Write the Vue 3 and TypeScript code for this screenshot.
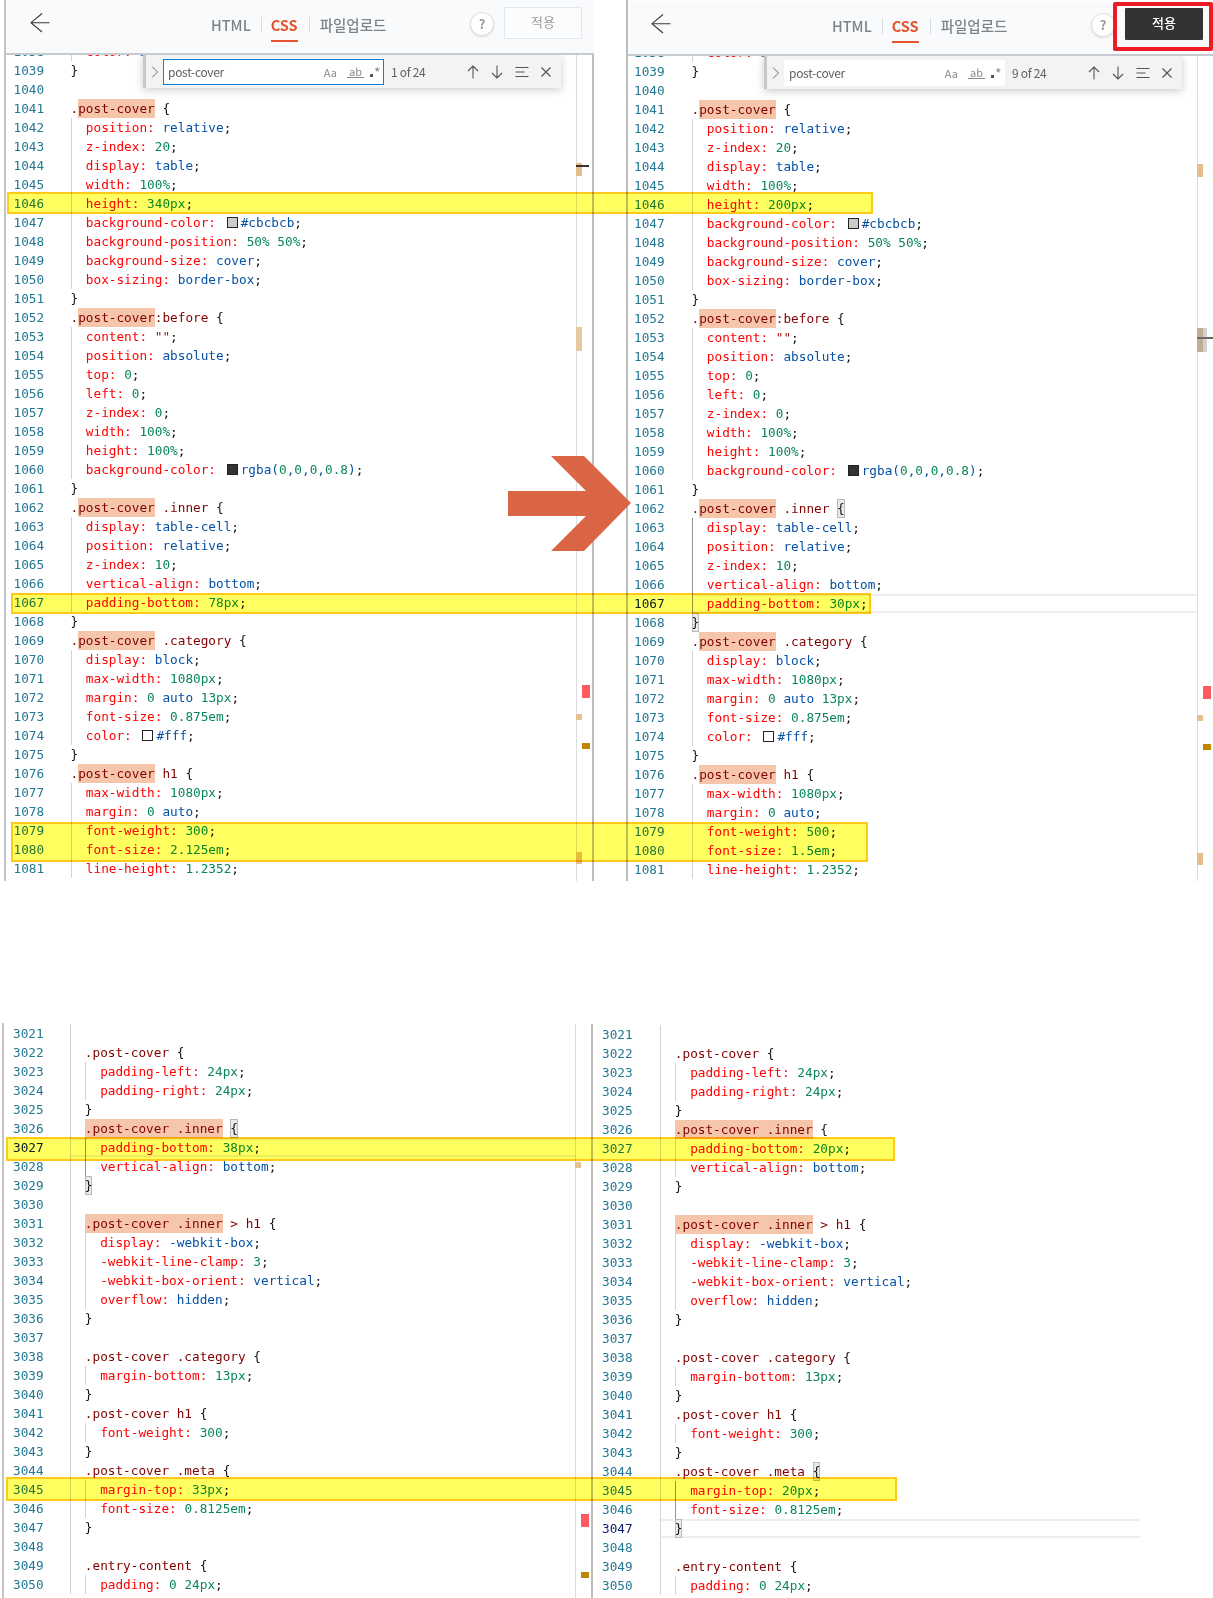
<script setup lang="ts">
type Tok = { t: string; c: string; sw?: string }
type Line = { n: number; toks: Tok[]; guides: number; active: boolean; cur: boolean; dark: boolean }

const topA = (h: string, pb: string, w: string, fs: string): string[] => [
  '  color: inherit;', '}', '', '.post-cover {', '  position: relative;', '  z-index: 20;', '  display: table;', '  width: 100%;',
  `  height: ${h};`, '  background-color: #cbcbcb;', '  background-position: 50% 50%;', '  background-size: cover;', '  box-sizing: border-box;', '}',
  '.post-cover:before {', '  content: "";', '  position: absolute;', '  top: 0;', '  left: 0;', '  z-index: 0;', '  width: 100%;', '  height: 100%;',
  '  background-color: rgba(0,0,0,0.8);', '}', '.post-cover .inner {', '  display: table-cell;', '  position: relative;', '  z-index: 10;', '  vertical-align: bottom;',
  `  padding-bottom: ${pb};`, '}', '.post-cover .category {', '  display: block;', '  max-width: 1080px;', '  margin: 0 auto 13px;', '  font-size: 0.875em;', '  color: #fff;', '}',
  '.post-cover h1 {', '  max-width: 1080px;', '  margin: 0 auto;', `  font-weight: ${w};`, `  font-size: ${fs};`, '  line-height: 1.2352;'
]

const bottomA = (pb: string, mt: string): string[] => [
  '  ', '  .post-cover {', '    padding-left: 24px;', '    padding-right: 24px;', '  }', '  .post-cover .inner {', `    padding-bottom: ${pb};`, '    vertical-align: bottom;', '  }', '  ',
  '  .post-cover .inner > h1 {', '    display: -webkit-box;', '    -webkit-line-clamp: 3;', '    -webkit-box-orient: vertical;', '    overflow: hidden;', '  }', '  ',
  '  .post-cover .category {', '    margin-bottom: 13px;', '  }', '  .post-cover h1 {', '    font-weight: 300;', '  }', '  .post-cover .meta {', `    margin-top: ${mt};`, '    font-size: 0.8125em;', '  }', '  ',
  '  .entry-content {', '    padding: 0 24px;'
]

function valueToks(v: string): Tok[] {
  const out: Tok[] = []
  const re = /(#[0-9a-f]{3,6})|(-?\d*\.?\d+(?:px|em|%)?)|("[^"]*")|([a-z-]+\(?)|(\s+)|(.)/g
  let m: RegExpExecArray | null
  while ((m = re.exec(v))) {
    if (m[1]) out.push({ t: '', c: 'sw', sw: m[1] }, { t: m[1], c: 'kw' })
    else if (m[2]) out.push({ t: m[2], c: 'val' })
    else if (m[3]) out.push({ t: m[3], c: 'str' })
    else if (m[4]) {
      if (m[4] === 'rgba(') out.push({ t: '', c: 'sw', sw: 'rgba(0,0,0,0.8)' })
      out.push({ t: m[4], c: 'kw' })
    } else if (m[5]) out.push({ t: m[5], c: 'pl' })
    else out.push({ t: m[0], c: m[0] === ')' || m[0] === ',' ? 'kw' : 'pl' })
  }
  return out
}

function tokenize(src: string, hl: string, box: boolean): Tok[] {
  const ws = src.match(/^\s*/)?.[0] ?? ''
  const body = src.slice(ws.length)
  const out: Tok[] = [{ t: ws, c: 'pl' }]
  if (!body) return out
  if (body === '}') {
    out.push({ t: '}', c: box ? 'brace box' : 'brace' })
  } else if (body.endsWith('{')) {
    const sel = body.slice(0, -1)
    const i = sel.indexOf(hl)
    if (i >= 0) {
      out.push({ t: sel.slice(0, i), c: 'sel' }, { t: hl, c: 'sel hl' }, { t: sel.slice(i + hl.length), c: 'sel' })
    } else out.push({ t: sel, c: 'sel' })
    out.push({ t: '{', c: box ? 'brace box' : 'brace' })
  } else {
    const k = body.indexOf(':')
    out.push({ t: body.slice(0, k + 1), c: 'prop' }, { t: ' ', c: 'pl' })
    out.push(...valueToks(body.slice(k + 2)))
  }
  return out
}

function build(sources: string[], start: number, hl: string, active: number, cur: boolean, boxes: number[], dark: number[]): Line[] {
  return sources.map((s, i) => {
    const n = start + i
    const indent = (s.match(/^\s*/)?.[0].length ?? 0)
    return {
      n,
      toks: tokenize(s, hl, boxes.includes(n)),
      guides: Math.floor(indent / 2),
      active: n === active,
      cur: cur && n === active,
      dark: dark.includes(n)
    }
  })
}

const tl = build(topA('340px', '78px', '300', '2.125em'), 1038, 'post-cover', 0, false, [], [])
const tr = build(topA('200px', '30px', '500', '1.5em'), 1038, 'post-cover', 1067, true, [1062, 1068], [1063, 1064, 1065, 1066, 1067])
const bl = build(bottomA('38px', '33px'), 3021, '.post-cover .inner', 3027, true, [3026, 3029], [3027, 3028])
const br = build(bottomA('20px', '20px'), 3021, '.post-cover .inner', 3047, true, [3044, 3047], [3045, 3046])

type Mark = { x: number; y: number; w: number; h: number; c: string }
const markSet = (x: number, dy: number): Mark[] => [
  { x, y: 163 + dy, w: 6, h: 13, c: '#e6bd8c' },
  { x, y: 327 + dy, w: 6, h: 24, c: '#e6c9a0' },
  { x: x + 6, y: 685 + dy, w: 8, h: 13, c: '#ff5a5f' },
  { x, y: 714 + dy, w: 6, h: 6, c: '#e8c191' },
  { x: x + 6, y: 743 + dy, w: 8, h: 6, c: '#bf8803' },
  { x, y: 852 + dy, w: 6, h: 12, c: '#e6bd8c' }
]
const marks: Mark[] = [
  ...markSet(576, 0),
  { x: 576, y: 165, w: 13, h: 1.5, c: '#333' },
  ...markSet(1197, 1),
  { x: 1197, y: 337, w: 16, h: 1.5, c: '#666' },
  { x: 1197, y: 328, w: 10, h: 24, c: 'rgba(120,120,120,.35)' },
  { x: 575, y: 1162, w: 6, h: 6, c: '#e8c191' },
  { x: 581, y: 1514, w: 8, h: 13, c: '#ff5a5f' },
  { x: 581, y: 1572, w: 8, h: 6, c: '#bf8803' }
]

const bands = [
  { x: 7, y: 192, w: 866, h: 22 },
  { x: 11, y: 593, w: 860, h: 21 },
  { x: 11, y: 822, w: 857, h: 40 },
  { x: 6, y: 1137, w: 889, h: 24 },
  { x: 6, y: 1477, w: 891, h: 24 }
]

const editors = [
  { key: 'tl', cls: 'p-tl', lines: tl, count: '1 of 24', focus: true, dark: false, top: true },
  { key: 'tr', cls: 'p-tr', lines: tr, count: '9 of 24', focus: false, dark: true, top: true }
]
const lower = [
  { key: 'bl', cls: 'p-bl', lines: bl },
  { key: 'br', cls: 'p-br', lines: br }
]
</script>

<template>
  <div class="page">
    <div class="row row-top">
      <section v-for="e in editors" :key="e.key" class="panel" :class="e.cls">
        <header class="bar">
          <svg class="back" width="20" height="20" viewBox="0 0 20 20" fill="none" stroke="#3a3a3a" stroke-width="1.1">
            <path d="M19.5 9.7H1M12 .5 1 9.7 12 19" />
          </svg>
          <nav class="tabs">
            <span class="tab">HTML</span>
            <i class="sep"></i>
            <span class="tab on">CSS</span>
            <i class="sep"></i>
            <span class="tab">파일업로드</span>
          </nav>
          <span class="help">?</span>
          <button class="apply" :class="{ dark: e.dark }">적용</button>
        </header>
        <div class="body">
          <div class="code">
            <div v-for="l in e.lines" :key="l.n" class="line">
              <span class="num" :class="{ act: l.active }">{{ l.n }}</span>
              <div class="txt" :class="{ cur: l.cur }">
                <i v-for="g in l.guides" :key="g" class="guide" :class="{ strong: l.dark && g === l.guides }" :style="{ left: (g - 1) * 15.3 + 'px' }"></i>
                <template v-for="(k, j) in l.toks" :key="j">
                  <i v-if="k.sw" class="swatch" :style="{ background: k.sw }"></i>
                  <span v-else :class="k.c">{{ k.t }}</span>
                </template>
              </div>
            </div>
          </div>
          <div class="ruler"></div>
        </div>
        <div class="find" :class="{ focus: e.focus }">
          <svg class="chev" width="8" height="14" viewBox="0 0 8 14" fill="none" stroke="#6f6f6f" stroke-width="1"><path d="M1 1.5 6.5 7 1 12.5" /></svg>
          <div class="input">
            <span class="q">post-cover</span>
            <span class="opts">
              <span class="o-aa">Aa</span>
              <span class="o-ab">ab</span>
              <span class="o-re"><i></i>*</span>
            </span>
          </div>
          <span class="count">{{ e.count }}</span>
          <div class="acts">
            <svg width="16" height="16" viewBox="0 0 16 16" fill="none" stroke="#555" stroke-width="1.1"><path d="M8 14.5V2M3 7l5-5 5 5" /></svg>
            <svg width="16" height="16" viewBox="0 0 16 16" fill="none" stroke="#555" stroke-width="1.1"><path d="M8 1.5V14M3 9l5 5 5-5" /></svg>
            <svg width="16" height="16" viewBox="0 0 16 16" fill="none" stroke="#555" stroke-width="1.1"><path d="M1.5 3.5h13M1.5 8h9M1.5 12.5h13" /></svg>
            <svg width="16" height="16" viewBox="0 0 16 16" fill="none" stroke="#555" stroke-width="1.2"><path d="M3.5 3.5l9 9M12.5 3.5l-9 9" /></svg>
          </div>
        </div>
      </section>
    </div>

    <div class="row row-bottom">
      <section v-for="e in lower" :key="e.key" class="panel" :class="e.cls">
        <div class="body">
          <div class="code">
            <div v-for="l in e.lines" :key="l.n" class="line">
              <span class="num" :class="{ act: l.active }">{{ l.n }}</span>
              <div class="txt" :class="{ cur: l.cur }">
                <i v-for="g in l.guides" :key="g" class="guide" :class="{ strong: l.dark && g === l.guides }" :style="{ left: (g - 1) * 15.3 + 'px' }"></i>
                <template v-for="(k, j) in l.toks" :key="j">
                  <span :class="k.c">{{ k.t }}</span>
                </template>
              </div>
            </div>
          </div>
          <div class="ruler"></div>
        </div>
      </section>
    </div>

    <i v-for="(m, i) in marks" :key="'m' + i" class="mark" :style="{ left: m.x + 'px', top: m.y + 'px', width: m.w + 'px', height: m.h + 'px', background: m.c }"></i>
    <i v-for="(b, i) in bands" :key="'b' + i" class="band" :style="{ left: b.x + 'px', top: b.y + 'px', width: b.w + 'px', height: b.h + 'px' }"></i>
    <svg class="arrow" width="126" height="98" viewBox="508 455 126 98"><polygon points="508,491 586,491 551,456 584,456 631,503 584,551 551,551 586,516 508,516" fill="#d96544" /></svg>
    <i class="redbox"></i>
  </div>
</template>

<style scoped>
.page {
  position: relative;
  width: 1213px;
  height: 1598px;
  overflow: hidden;
  background: #fff;
  font-family: "DejaVu Sans Mono", monospace;
}
.row-top {
  display: grid;
  grid-template-columns: 594px 587px;
  column-gap: 32px;
  height: 881px;
}
.row-bottom {
  display: grid;
  grid-template-columns: 593px 547px;
  height: 575px;
  margin-top: 142px;
}
.panel {
  position: relative;
  overflow: hidden;
  min-width: 0;
  --gut: 64.5px;
  --numpad: 7.5px;
  --barl: 24px;
  --barr: 12px;
}
.p-tl {
  margin-left: 4px;
  border-left: 2px solid #c4c4c4;
}
.p-tr {
  border-left: 2px solid #bdbdbd;
  padding-top: 1px;
  --gut: 63.5px;
  --numpad: 6px;
  --barl: 23px;
  --barr: 10px;
}
.p-bl {
  margin-left: 2px;
  border-left: 2px solid #c4c4c4;
  padding-top: 1px;
  --gut: 65.5px;
  --numpad: 9px;
}
.p-br {
  padding-top: 2px;
  --gut: 66.5px;
  --numpad: 9px;
}
.bar {
  display: flex;
  align-items: center;
  padding: 0 var(--barr) 0 var(--barl);
  box-sizing: border-box;
  background: #f9fafc;
  border-bottom: 2px solid #c6cbd2;
  height: 55px;
  position: relative;
  z-index: 3;
  font-family: "Noto Sans CJK KR", "Noto Sans", sans-serif;
}
.back {
  flex: none;
  margin-top: -7px;
}
.tabs {
  display: flex;
  align-items: center;
  margin-left: 161px;
  gap: 10px;
  height: 49px;
  margin-top: -4px;
  font-size: 14.5px;
  font-weight: 500;
  color: #7d838b;
}
.tab {
  position: relative;
  line-height: 20px;
}
.tab.on {
  margin: 0 1px 0 -1px;
  color: #e5532d;
  font-weight: 700;
}
.tab.on::after {
  content: "";
  position: absolute;
  left: 0;
  right: 0;
  top: 25px;
  height: 2px;
  background: #e5532d;
}
.sep {
  width: 1px;
  height: 16px;
  background: #d8dbe0;
}
.help {
  margin-left: auto;
  width: 24px;
  height: 24px;
  box-sizing: border-box;
  margin-top: -5px;
  border: 1px solid #dcdfe3;
  border-radius: 50%;
  background: #fff;
  box-shadow: 0 1px 2px rgba(0, 0, 0, .12);
  color: #9a9a9a;
  font-size: 13px;
  font-weight: 700;
  line-height: 22px;
  text-align: center;
}
.apply {
  margin-left: 10px;
  margin-top: -7px;
  width: 78px;
  height: 32px;
  border: 1px solid #e4e7eb;
  background: #fbfcfd;
  color: #9a9a9a;
  font: 13px "Noto Sans CJK KR", sans-serif;
  padding: 0 0 3px;
}
.apply.dark {
  border: 0;
  background: #333;
  color: #fff;
  font-weight: 500;
  border-radius: 1px;
}
.body {
  display: flex;
  margin-top: -13px;
  min-height: 900px;
}
.p-bl .body,
.p-br .body {
  margin-top: 0;
  min-height: 576px;
}
.code {
  flex: 1;
  min-width: 0;
}
.ruler {
  flex: none;
  box-sizing: border-box;
  width: 18px;
  border-left: 1px solid #dcdcdc;
  border-right: 2px solid #bdbdbd;
}
.p-tr .ruler {
  width: 16px;
  border-right: 0;
}
.p-br .ruler {
  display: none;
}
.line {
  display: flex;
  height: 19px;
  font-size: 12.72px;
  line-height: 19px;
  white-space: pre;
}
.num {
  flex: none;
  box-sizing: border-box;
  width: var(--gut);
  padding-left: var(--numpad);
  color: #237893;
}
.num.act {
  color: #0b216f;
}
.txt {
  position: relative;
  flex: 1;
  min-width: 0;
}
.txt.cur::before {
  content: "";
  position: absolute;
  inset: 0;
  border: solid #eee;
  border-width: 2px 0;
}
.guide {
  position: absolute;
  top: 0;
  bottom: 0;
  width: 1px;
  background: #d3d3d3;
}
.guide.strong {
  background: #939393;
}
.pl,
.brace {
  color: #111;
  position: relative;
}
.sel {
  color: #800000;
  position: relative;
}
.hl {
  display: inline-block;
  height: 19px;
  background: #f6c6ab;
}
.box {
  display: inline-block;
  width: 7.65px;
  height: 19px;
  background: #e9ebe8;
  box-shadow: inset 0 0 0 1px #b9b9b9;
}
.prop {
  color: #f00;
  position: relative;
}
.kw {
  color: #0451a5;
  position: relative;
}
.val {
  color: #098658;
  position: relative;
}
.str {
  color: #a31515;
  position: relative;
}
.swatch {
  display: inline-block;
  box-sizing: border-box;
  width: 11px;
  height: 11px;
  margin: 0 3px 0 3px;
  border: 1px solid #222;
  vertical-align: -1px;
}
.find {
  position: absolute;
  z-index: 2;
  left: 137px;
  top: 55px;
  display: flex;
  align-items: center;
  box-sizing: border-box;
  width: 418px;
  height: 33px;
  border-left: 3px solid #c8c8c8;
  background: #f3f3f3;
  box-shadow: 0 2px 8px rgba(168, 168, 168, .6);
  font-family: "Noto Sans CJK KR", "Noto Sans", sans-serif;
  color: #616161;
}
.p-tr .find {
  left: 136px;
  top: 56px;
}
.chev {
  flex: none;
  margin: 0 4px 0 5px;
}
.input {
  display: flex;
  align-items: center;
  flex: none;
  box-sizing: border-box;
  width: 221px;
  height: 26px;
  padding: 0 1px 0 4px;
  background: #fff;
  border: 1px solid #fff;
  font-size: 12px;
  letter-spacing: -0.3px;
}
.focus .input {
  border-color: #0e7fd6;
}
.opts {
  display: flex;
  align-items: center;
  margin-left: auto;
  gap: 6px;
  font-size: 11px;
  letter-spacing: 0;
  color: #8a8a8a;
}
.o-aa {
  margin-right: 4px;
}
.o-ab {
  border-bottom: 1px solid #8a8a8a;
  line-height: 12px;
  padding: 0 2px;
}
.o-re {
  display: inline-flex;
  align-items: flex-start;
  width: 12px;
  font-size: 14px;
  line-height: 14px;
}
.o-re i {
  width: 3px;
  height: 3px;
  margin: 9px 1px 0 0;
  background: #555;
}
.count {
  margin-left: 7px;
  font-size: 12px;
  letter-spacing: -0.3px;
}
.acts {
  display: flex;
  align-items: center;
  gap: 8.5px;
  margin-left: auto;
  padding-right: 7px;
}
.mark {
  position: absolute;
}
.band {
  position: absolute;
  box-sizing: border-box;
  background: #ffff60;
  mix-blend-mode: multiply;
  border: 2px solid #ffc91a;
}
.arrow {
  position: absolute;
  z-index: 4;
  left: 508px;
  top: 455px;
}
.redbox {
  position: absolute;
  z-index: 5;
  left: 1113px;
  top: 2px;
  width: 100px;
  height: 49px;
  box-sizing: border-box;
  border: 4px solid #ec1c24;
  border-radius: 2px;
}
</style>
